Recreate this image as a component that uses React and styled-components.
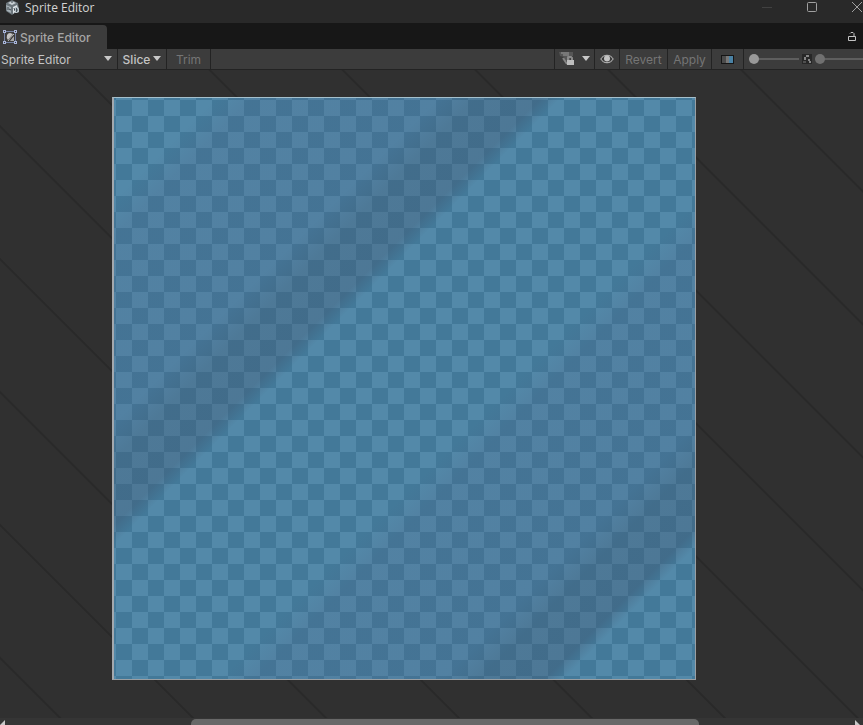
import { useState } from "react";
import styled, { createGlobalStyle } from "styled-components";

const GlobalStyle = createGlobalStyle`
  * {
    box-sizing: border-box;
  }

  body {
    margin: 0;
    overflow: hidden;
    background: #303030;
    color: #c4c4c4;
    font-family: Inter, sans-serif;
  }

  button, select, input {
    margin: 0;
    font: inherit;
    color: inherit;
  }

  svg {
    flex: none;
  }
`;

const Window = styled.div`
  display: flex;
  flex-direction: column;
  height: 100vh;
  overflow: hidden;
`;

const TitleBar = styled.header`
  display: flex;
  flex: none;
  align-items: flex-start;
  height: 23px;
  padding-left: 5px;
  background: #292929;
`;

const Title = styled.h1`
  flex: 1;
  margin: 0 0 0 5px;
  font-family: "Open Sans", sans-serif;
  font-size: 12px;
  font-weight: 400;
  line-height: 16px;
  color: #d4d4d4;
`;

const WindowButton = styled.button`
  display: flex;
  justify-content: center;
  width: 45px;
  height: 16px;
  padding: 0;
  border: 0;
  background: none;
  color: ${(props) => (props.$dim ? "#414141" : "#a0a0a0")};

  &:last-child {
    margin-right: -16px;
  }
`;

const TabBar = styled.nav`
  display: flex;
  flex: none;
  align-items: flex-end;
  justify-content: space-between;
  height: 26px;
  background: #171717;
`;

const Tab = styled.button`
  display: flex;
  align-items: center;
  gap: 3px;
  height: 24px;
  padding: 0 16px 0 3px;
  border: 0;
  border-radius: 0 4px 0 0;
  background: #3c3c3c;
  font-size: 12px;
  font-weight: 500;
  color: #a6a6a6;
`;

const LockButton = styled.button`
  display: flex;
  align-items: center;
  height: 24px;
  padding: 0 6px;
  border: 0;
  background: none;
  color: #c4c4c4;
`;

const Toolbar = styled.div`
  display: flex;
  flex: none;
  height: 21px;
  border-bottom: 1px solid #232323;
  background: #3c3c3c;
  font-size: 12px;
`;

const ModeField = styled.label`
  display: flex;
  align-items: center;
  width: 118px;
  padding-right: 5px;
  border-right: 1px solid #232323;
`;

const ModeSelect = styled.select`
  flex: 1;
  padding: 0 0 0 1px;
  border: 0;
  background: none;
  appearance: none;
`;

const ToolButton = styled.button`
  display: flex;
  align-items: center;
  justify-content: center;
  gap: ${(props) => props.$gap || 3}px;
  width: ${(props) => props.$width}px;
  padding: 0;
  border: 0;
  border-right: 1px solid #232323;
  background: none;
  font-weight: ${(props) => (props.disabled ? 400 : 500)};

  &:disabled {
    color: #757575;
  }
`;

const Spacer = styled.div`
  flex: 1;
  border-right: 1px solid #232323;
`;

const Sliders = styled.div`
  display: flex;
  flex: none;
  align-items: center;
  gap: 3px;
  width: 119px;
  padding-left: 5px;
  overflow: hidden;
`;

const Slider = styled.input`
  flex: none;
  width: 50px;
  height: 12px;
  background: linear-gradient(#5e5e5e, #5e5e5e) center / 100% 2px no-repeat;
  appearance: none;

  &::-webkit-slider-thumb {
    width: 10px;
    height: 10px;
    border-radius: 50%;
    background: ${(props) => (props.$dim ? "#707070" : "#999999")};
    appearance: none;
  }
`;

const Canvas = styled.main`
  flex: 1;
  min-height: 0;
  padding: 27px 167px 37px 112px;
  overflow: hidden;
  background: repeating-linear-gradient(
    45deg,
    #303030 0px,
    #303030 41px,
    #292929 42px,
    #292929 43px,
    #303030 44px,
    #303030 94px
  );
`;

const Sprite = styled.div`
  aspect-ratio: 584 / 583;
  border: 1px solid #9a9fa3;
  border-top-color: #a4c0cd;
  border-left: 2px solid #a3a8ad;
  background:
    repeating-linear-gradient(
      135deg,
      rgba(75, 87, 125, 0) 0px,
      rgba(75, 87, 125, 0) 72px,
      rgba(75, 87, 125, 0.15) 98px,
      rgba(75, 87, 125, 0.16) 230px,
      rgba(62, 75, 100, 0.26) 256px,
      rgba(62, 75, 100, 0.28) 302px,
      rgba(62, 75, 100, 0) 316px,
      rgba(75, 87, 125, 0) 413px
    ),
    repeating-conic-gradient(#5389a9 0 25%, #437999 0 50%) 2px 2px / 32px 32px;
`;

const ScrollBar = styled.div`
  display: flex;
  flex: none;
  height: 7px;
  overflow: hidden;
  background: #353535;
`;

const ScrollTrack = styled.div`
  display: grid;
  flex: 1;
  grid-template-columns: 186fr 508fr 156fr;
`;

const ScrollThumb = styled.div`
  grid-column: 2;
  height: 13px;
  margin-top: 1px;
  border-radius: 5px;
  background: #686868;
`;

const ScrollArrow = styled.svg`
  margin-top: 2px;
`;

function Caret() {
  return (
    <svg width="8" height="6" viewBox="0 0 8 6" aria-hidden="true">
      <path d="M0 0h8L4 5z" fill="#c8c8c8" />
    </svg>
  );
}

function UnityIcon() {
  return (
    <svg width="15" height="16" viewBox="0 0 15 16" aria-hidden="true">
      <path d="M1 3 7 0l6 3 1 7-7 5-6-4z" fill="#6b757b" />
      <path d="m3 3 4-2 4 2-4 2z" fill="#c9d0d4" />
      <path d="m1 5 5 2v6l-4-2z" fill="#a5afb5" />
      <path d="m8 7 4-2 1 4-5 5z" fill="#dde3e6" />
      <path d="M7 1v2M3 7v3M4 9l2 1M9 8l1 3" stroke="#3d464c" />
      <path d="M10 7h3l1 2v3l-2 1h-2z" fill="#b9c3c9" />
      <path d="M11.500 8v4M12 10h1" stroke="#48535a" />
    </svg>
  );
}

function SpriteIcon() {
  return (
    <svg width="14" height="14" viewBox="0 0 14 14" aria-hidden="true">
      <path d="M1.500 1v12M1 1.500h12M12.500 1v12M1 12.500h12" stroke="#7582a3" />
      <path d="M0 0h3v3H0zM11 0h3v3h-3zM0 11h3v3H0zM11 11h3v3h-3z" fill="#a9b6da" />
      <path d="M1 1h1v1H1zM12 1h1v1h-1zM1 12h1v1H1zM12 12h1v1h-1z" fill="#3c3c3c" />
      <path d="M4 5q1-2 3-2l3 1-5 6q-2-2-1-5z" fill="#c4c4c4" />
      <path d="m5 11 6-7" stroke="#c4c4c4" />
      <path d="m7 11 4-5v5z" fill="#a9a9a9" />
      <path d="m6 11 5-6" stroke="#3c3c3c" />
    </svg>
  );
}

function LockIcon() {
  return (
    <svg width="9" height="12" viewBox="0 0 9 12" fill="none" stroke="currentColor" aria-hidden="true">
      <path d="M.5 5.500h7v4h-7zM2 2.500l1-1h2l1 1v3" />
    </svg>
  );
}

function SnapIcon() {
  return (
    <svg width="16" height="16" viewBox="0 0 16 16" aria-hidden="true">
      <path d="M0 1h14v4h-3v5H5V6L1 5z" fill="#565656" />
      <path d="M2 2h8M4 4h5v3" fill="none" stroke="#787878" strokeWidth="2" />
      <path d="m4 7 4 6" stroke="#858585" strokeWidth="2" />
      <path d="M9 10V7l1-1h2l1 1v3" fill="none" stroke="#8b8b8b" strokeWidth="2" />
      <path d="M8 9h7v5H8z" fill="#bdbdbd" />
    </svg>
  );
}

function EyeIcon() {
  return (
    <svg width="14" height="10" viewBox="0 0 14 10" aria-hidden="true">
      <path d="M.8 5C3.500 0 10.500 0 13.200 5 10.500 10 3.500 10 .8 5z" fill="none" stroke="#c4c4c4" />
      <circle cx="7" cy="4.500" r="3" fill="#c4c4c4" />
    </svg>
  );
}

function ChannelIcon() {
  return (
    <svg width="13" height="9" viewBox="0 0 13 9" aria-hidden="true">
      <path d="M0 0h13v9H0z" fill="#151515" />
      <path d="M1 1h4v7H1z" fill="#4b4b4b" />
      <path d="M5 1h3v7H5z" fill="#777" />
      <path d="M8 1h4v7H8z" fill="#4a82a5" />
    </svg>
  );
}

function MipIcon() {
  return (
    <svg width="10" height="10" viewBox="0 0 10 10" aria-hidden="true">
      <path d="M0 0h10v10H0z" fill="#272727" />
      <path d="M4 1h3v2H4zM2 3h2v3H2zM6 5h2v2h1v2H7V7H6z" fill="#858585" />
      <path d="M1 7h3v2H1z" fill="#505050" />
    </svg>
  );
}

export default function App() {
  const [zoom, setZoom] = useState(0);
  const [mip, setMip] = useState(0);

  return (
    <Window>
      <GlobalStyle />
      <TitleBar>
        <UnityIcon />
        <Title>Sprite Editor</Title>
        <WindowButton $dim aria-label="Minimize">
          <svg width="10" height="14" fill="none" stroke="currentColor">
            <path d="M0 7.500h10" />
          </svg>
        </WindowButton>
        <WindowButton aria-label="Maximize">
          <svg width="10" height="14" fill="none" stroke="currentColor">
            <rect x=".5" y="2.500" width="9" height="9" rx="1" />
          </svg>
        </WindowButton>
        <WindowButton aria-label="Close">
          <svg width="10" height="14" fill="none" stroke="currentColor">
            <path d="m0 2 10 10M10 2 0 12" />
          </svg>
        </WindowButton>
      </TitleBar>

      <TabBar>
        <Tab>
          <SpriteIcon />
          Sprite Editor
        </Tab>
        <LockButton aria-label="Lock">
          <LockIcon />
        </LockButton>
      </TabBar>

      <Toolbar>
        <ModeField>
          <ModeSelect aria-label="Editor mode">
            <option>Sprite Editor</option>
          </ModeSelect>
          <Caret />
        </ModeField>
        <ToolButton $width={49}>
          Slice
          <Caret />
        </ToolButton>
        <ToolButton $width={44} disabled>Trim</ToolButton>
        <Spacer />
        <ToolButton $width={40} $gap={7} aria-label="Snapping">
          <SnapIcon />
          <Caret />
        </ToolButton>
        <ToolButton $width={25} aria-label="Visibility">
          <EyeIcon />
        </ToolButton>
        <ToolButton $width={48} disabled>Revert</ToolButton>
        <ToolButton $width={44} disabled>Apply</ToolButton>
        <ToolButton $width={32} aria-label="Color channels">
          <ChannelIcon />
        </ToolButton>
        <Sliders>
          <Slider
            type="range"
            aria-label="Zoom"
            value={zoom}
            onChange={(e) => setZoom(e.target.value)}
          />
          <MipIcon />
          <Slider
            $dim
            type="range"
            aria-label="Mip level"
            value={mip}
            onChange={(e) => setMip(e.target.value)}
          />
        </Sliders>
      </Toolbar>

      <Canvas>
        <Sprite />
      </Canvas>

      <ScrollBar>
        <ScrollArrow width="5" height="10" viewBox="0 0 5 10">
          <path d="M5 0v10L0 5z" fill="#c8c8c8" />
        </ScrollArrow>
        <ScrollTrack>
          <ScrollThumb />
        </ScrollTrack>
        <ScrollArrow width="8" height="10" viewBox="0 0 8 10">
          <path d="M0 0v10l5-5z" fill="#c8c8c8" />
        </ScrollArrow>
      </ScrollBar>
    </Window>
  );
}
